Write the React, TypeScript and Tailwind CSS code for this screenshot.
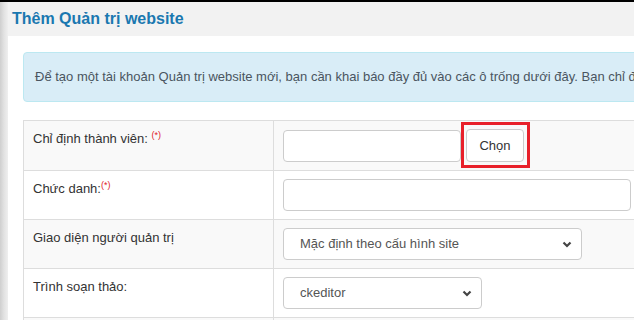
import React from 'react';

function Required() {
    return <span className="relative top-[-5px] text-[9px] leading-none text-[#e0202a]">(*)</span>;
}

function Chevron() {
    return (
        <svg width="12" height="12" viewBox="0 0 12 12" className="text-[#444]">
            <path d="M2.5 4.5 L6 8 L9.5 4.5" fill="none" stroke="currentColor" strokeWidth="2.2" />
        </svg>
    );
}

function Select({ value, width }: { value: string; width: string }) {
    return (
        <div className={`${width} h-[32px] flex items-center justify-between pl-[16px] pr-[8px] bg-white border border-[#ccc] rounded-[4px] text-[#555]`}>
            <span>{value}</span>
            <Chevron />
        </div>
    );
}

export default function App() {
    const rows = [
        {
            label: (
                <>
                    Chỉ định thành viên: <Required />
                </>
            ),
            field: (
                <div className="flex items-center">
                    <div className="w-[178px] h-[32px] bg-white border border-[#ccc] rounded-[4px]" />
                    <div className="relative ml-[5px]">
                        <button className="w-[58px] h-[33px] bg-white border border-[#ccc] rounded-[4px] text-[#333]">Chọn</button>
                        <div className="absolute left-[-5px] right-[-6px] top-[-7px] bottom-[-6px] border-[3px] border-[#e8202a] pointer-events-none" />
                    </div>
                </div>
            ),
            bg: 'bg-[#f9f9f9]',
        },
        {
            label: (
                <>
                    Chức danh:<Required />
                </>
            ),
            field: <div className="w-[348px] h-[32px] bg-white border border-[#ccc] rounded-[4px]" />,
            bg: 'bg-white',
        },
        {
            label: 'Giao diện người quản trị',
            field: <Select value="Mặc định theo cấu hình site" width="w-[299px]" />,
            bg: 'bg-[#f9f9f9]',
        },
        {
            label: 'Trình soạn thảo:',
            field: <Select value="ckeditor" width="w-[199px]" />,
            bg: 'bg-white',
        },
        { label: '', field: <div className="h-[32px]" />, bg: 'bg-[#f9f9f9]' },
    ];

    return (
        <div className="w-[634px] h-[320px] overflow-hidden bg-white text-[13px] text-[#333]" style={{ fontFamily: '"Liberation Sans", Arial, sans-serif' }}>
            <div className="h-[2px] bg-black" />
            <div className="flex h-[318px]">
                <div className="w-[8px] shrink-0 bg-gradient-to-r from-[#cfcfcf] via-[#e2e2e2] to-[#efefef]" />
                <div className="flex-1 min-w-0">
                    <div className="h-[34px] bg-[#f2f2f2] flex items-center pl-[4px]">
                        <h1 className="text-[16px] font-bold text-[#1a78b0]">Thêm Quản trị website</h1>
                    </div>
                    <div className="pl-[15px] pt-[16px] w-[1000px]">
                        <div className="h-[50px] flex items-center pl-[11px] bg-[#d9edf7] border border-[#bce8f1] rounded-[4px] text-[#4a5560] whitespace-nowrap overflow-hidden">
                            Để tạo một tài khoản Quản trị website mới, bạn cần khai báo đầy đủ vào các ô trống dưới đây. Bạn chỉ được chọn thành viên đã có trong hệ thống.
                        </div>
                        <div className="mt-[18px] border-t border-l border-[#ddd]">
                            {rows.map((r, i) => (
                                <div key={i} className={`flex border-b border-[#ddd] ${r.bg}`}>
                                    <div className="w-[250px] shrink-0 border-r border-[#ddd] px-[9px] pt-[8px] leading-[20px]">{r.label}</div>
                                    <div className="flex-1 px-[9px] py-[8px]">{r.field}</div>
                                </div>
                            ))}
                        </div>
                    </div>
                </div>
            </div>
        </div>
    );
}
